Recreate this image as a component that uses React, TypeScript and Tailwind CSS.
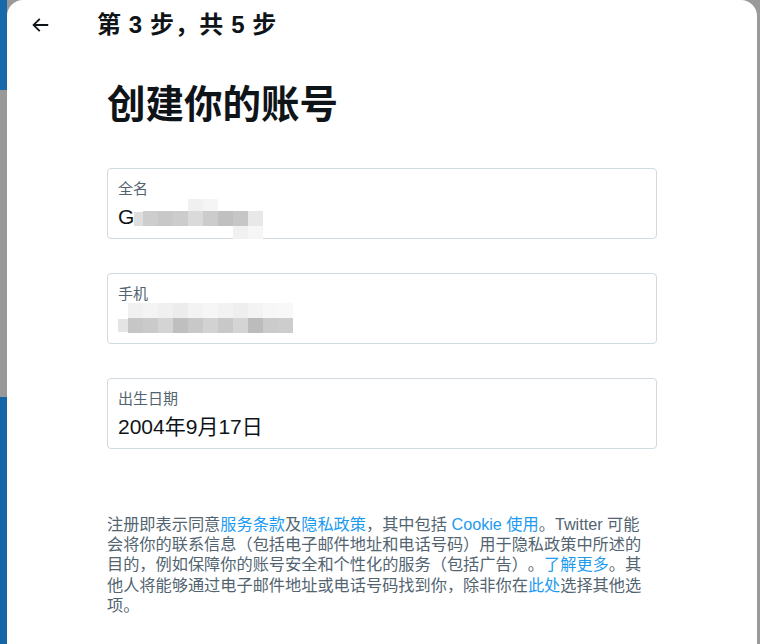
import React from 'react';

const fontStack = '"Liberation Sans", "Noto Sans CJK SC", sans-serif';

type Cell = { x: number; y: number; w: number; h: number; fill: string };

// pixelated (blurred) parts of the personal data
const nameCells: Cell[] = [
  { x: 26, y: 43, w: 9, h: 14, fill: '#dedede' },
  { x: 35, y: 42, w: 15, h: 15, fill: '#cdcdcd' },
  { x: 50, y: 42, w: 15, h: 15, fill: '#c8c8c8' },
  { x: 65, y: 42, w: 15, h: 15, fill: '#cccccc' },
  { x: 80, y: 42, w: 15, h: 15, fill: '#dadada' },
  { x: 95, y: 42, w: 15, h: 15, fill: '#cccccc' },
  { x: 110, y: 42, w: 15, h: 15, fill: '#c0c0c0' },
  { x: 125, y: 42, w: 15, h: 15, fill: '#c6c6c6' },
  { x: 140, y: 42, w: 15, h: 15, fill: '#e8e8e8' },
  { x: 80, y: 30, w: 15, h: 12, fill: '#f0f0f0' },
  { x: 95, y: 30, w: 15, h: 12, fill: '#f5f5f5' },
  { x: 125, y: 57, w: 15, h: 13, fill: '#f1f1f1' },
  { x: 140, y: 57, w: 15, h: 13, fill: '#f6f6f6' },
];

const phoneGrays = ['#c6c6c6', '#cacaca', '#d4d4d4', '#bfbfbf', '#c8c8c8', '#d2d2d2', '#c8c8c8', '#d4d4d4', '#bcbcbc', '#cbcbcb', '#cdcdcd'];
const phoneTop = ['#f1f1f1', '#f4f4f4', '#f0f0f0', '#ececec', '#f3f3f3', '#f6f6f6', '#f2f2f2', '#eeeeee', '#f3f3f3', '#f7f7f7', '#f8f8f8'];
const phoneCells: Cell[] = [
  { x: 10, y: 45, w: 10, h: 13, fill: '#e4e4e4' },
  ...phoneGrays.map((fill, i) => ({ x: 20 + i * 15, y: 44, w: 15, h: 15, fill })),
  ...phoneTop.map((fill, i) => ({ x: 20 + i * 15, y: 29, w: 15, h: 15, fill })),
];

const Mosaic = ({ cells }: { cells: Cell[] }) => (
  <svg className="absolute left-0 top-0 pointer-events-none" width="550" height="71" viewBox="0 0 550 71">
    {cells.map((c, i) => (
      <rect key={i} x={c.x} y={c.y} width={c.w} height={c.h} fill={c.fill} />
    ))}
  </svg>
);

interface FieldProps {
  label: string;
  value?: string;
  cells?: Cell[];
}

const Field: React.FC<FieldProps> = ({ label, value, cells }) => (
  <div className="relative h-[71px] w-[550px] rounded-[4px] border border-[#cfd9de] px-[10px] pt-[9px]">
    <div className="text-[15px] leading-[22px] text-[#536471]">{label}</div>
    <div className="mt-[3px] text-[21px] leading-[28px] text-[#0f1419]">{value ?? '\u00a0'}</div>
    {cells && <Mosaic cells={cells} />}
  </div>
);

const Link = ({ children }: { children: React.ReactNode }) => (
  <span className="text-[#1d9bf0]">{children}</span>
);

export default function App() {
  return (
    <div
      className="flex h-[644px] w-[760px] overflow-hidden bg-[#9a9a9a] [text-spacing-trim:space-all]"
      style={{ fontFamily: fontStack }}
    >
      {/* page behind the dialog */}
      <div className="flex w-[7px] flex-col">
        <div className="h-[90px] bg-[#1769aa]" />
        <div className="h-[307px] bg-[#999999]" />
        <div className="flex-1 bg-[#1466a6]" />
      </div>

      <div className="flex-1 rounded-t-[16px] bg-white">
        {/* header */}
        <div className="flex h-[50px] items-center">
          <svg className="ml-[22px] text-[#0f1419]" width="22" height="22" viewBox="0 0 24 24" fill="currentColor">
            <path d="M7.414 13l5.043 5.04-1.414 1.42L3.586 12l7.457-7.46 1.414 1.42L7.414 11H21v2H7.414z" />
          </svg>
          <h2 className="ml-[46px] text-[24px] font-bold leading-[28px] tracking-[0.6px] text-[#0f1419]">第 3 步，共 5 步</h2>
        </div>

        <div className="ml-[100px] w-[550px]">
          <h1 className="mt-[32px] text-[38.5px] font-bold leading-[46px] text-[#0f1419]">创建你的账号</h1>

          <div className="mt-[40px] flex flex-col gap-[34px]">
            <Field label="全名" value="G" cells={nameCells} />
            <Field label="手机" cells={phoneCells} />
            <Field label="出生日期" value="2004年9月17日" />
          </div>

          <p className="mt-[65px] w-[540px] text-[16.2px] leading-[20.2px] text-[#536471]">
            注册即表示同意<Link>服务条款</Link>及<Link>隐私政策</Link>，其中包括 <Link>Cookie 使用</Link>。Twitter
            可能会将你的联系信息（包括电子邮件地址和电话号码）用于隐私政策中所述的目的，例如保障你的账号安全和个性化的服务（包括广告）。
            <Link>了解更多</Link>。其他人将能够通过电子邮件地址或电话号码找到你，除非你在<Link>此处</Link>选择其他选项。
          </p>
        </div>
      </div>

      <div className="w-[3px] bg-[#9a9a9a]" />
    </div>
  );
}
